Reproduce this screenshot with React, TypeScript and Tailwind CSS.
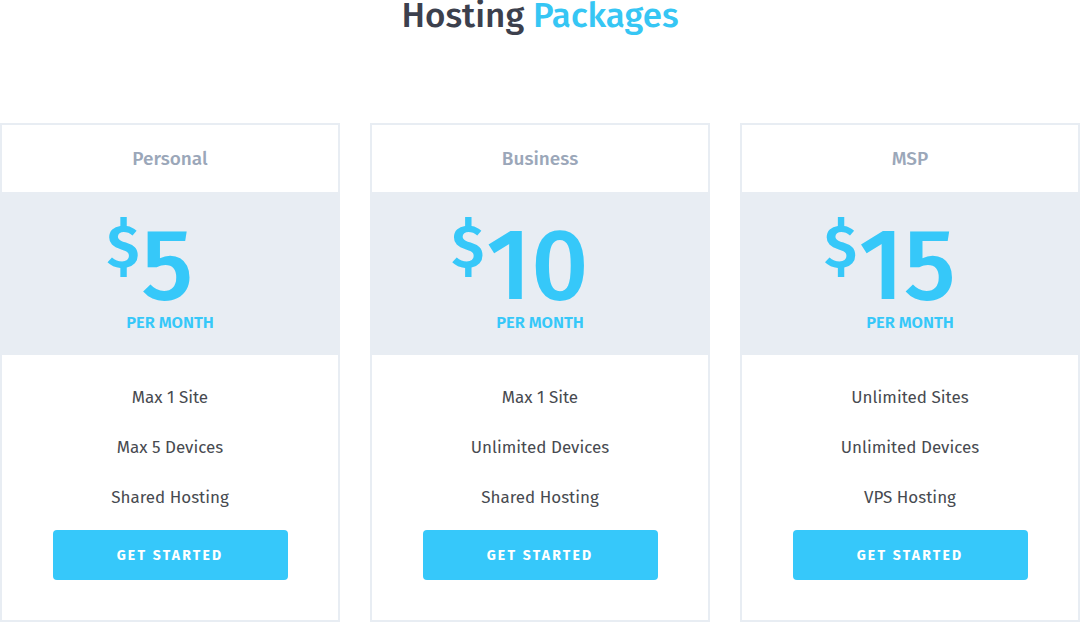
const plans = [
  { name: "Personal", price: "5", features: ["Max 1 Site", "Max 5 Devices", "Shared Hosting"] },
  { name: "Business", price: "10", features: ["Max 1 Site", "Unlimited Devices", "Shared Hosting"] },
  { name: "MSP", price: "15", features: ["Unlimited Sites", "Unlimited Devices", "VPS Hosting"] },
];

function PlanCard({ plan }: { plan: (typeof plans)[number] }) {
  return (
    <div className="w-[340px] h-[499px] border-2 border-[#e8edf3] bg-white flex flex-col">
      <div className="h-[67px] pt-[2px] flex items-center justify-center text-[19px] font-medium text-[#9ba7b9]">
        {plan.name}
      </div>
      <div className="h-[163px] bg-[#e8edf3] flex flex-col items-center">
        <div className="flex items-start text-[#36c8f9] pr-10 mt-[30px] h-[88px]">
          <span className="text-[60px] leading-[50px] font-semibold mr-[2px]">$</span>
          <span className="text-[100px] leading-[88px] font-medium">{plan.price}</span>
        </div>
        <div className="text-[16.5px] font-semibold text-[#36c8f9] mt-[1px]">PER MONTH</div>
      </div>
      <div className="flex flex-col items-center pt-[30px]">
        {plan.features.map((f) => (
          <div key={f} className="h-[50px] flex items-start justify-center text-[17px] text-[#474a50]">
            {f}
          </div>
        ))}
        <button className="mt-[-5px] w-[235px] h-[50px] rounded bg-[#36c8fa] text-white text-[14px] font-bold tracking-[2.2px]">
          GET STARTED
        </button>
      </div>
    </div>
  );
}

export default function App() {
  return (
    <div className="w-[1080px] h-[622px] overflow-hidden bg-white font-['Fira_Sans','Open_Sans',sans-serif]">
      <h1 className="text-center text-[35px] leading-[30px] font-medium text-[#3c404d]">
        Hosting <span className="text-[#36c6f4]">Packages</span>
      </h1>
      <div className="flex gap-[30px] mt-[93px]">
        {plans.map((p) => (
          <PlanCard key={p.name} plan={p} />
        ))}
      </div>
    </div>
  );
}
